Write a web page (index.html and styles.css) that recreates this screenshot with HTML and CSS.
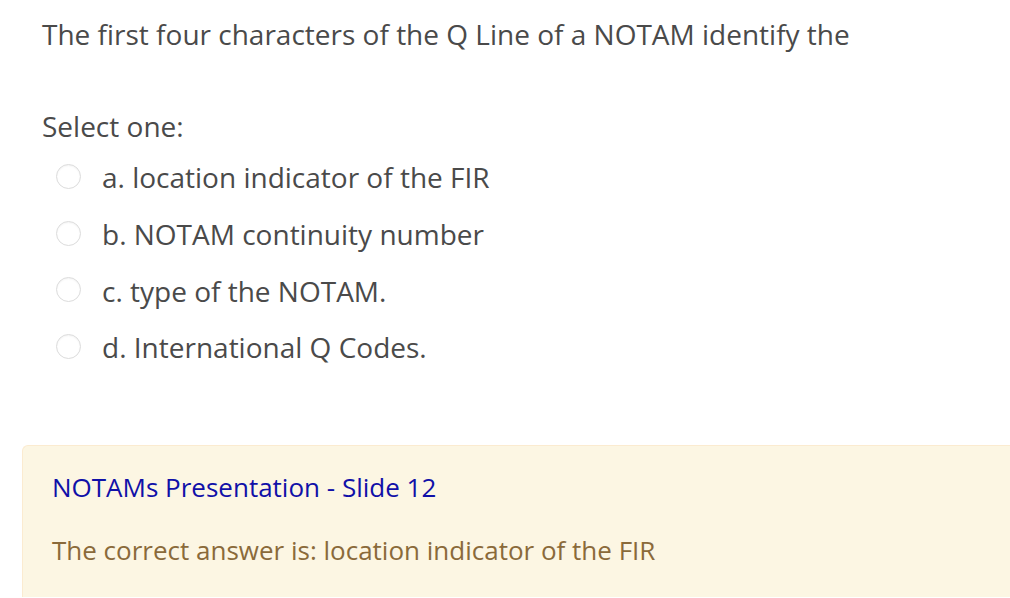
FILE: index.html
```html
<!DOCTYPE html>
<html>
<head>
<meta charset="utf-8">
<link rel="stylesheet" href="styles.css">
</head>
<body>
<div class="que">
  <div class="qtext">The first four characters of the Q Line of a NOTAM identify the</div>
  <div class="prompt">Select one:</div>
  <div class="answers">
    <div class="opt"><span class="radio"></span><span class="label">a. location indicator of the FIR</span></div>
    <div class="opt"><span class="radio"></span><span class="label">b. NOTAM continuity number</span></div>
    <div class="opt"><span class="radio"></span><span class="label">c. type of the NOTAM.</span></div>
    <div class="opt"><span class="radio"></span><span class="label">d. International Q Codes.</span></div>
  </div>
  <div class="outcome">
    <div class="feedback">NOTAMs Presentation - Slide 12</div>
    <div class="right">The correct answer is: location indicator of the FIR</div>
  </div>
</div>
</body>
</html>
```
FILE: styles.css
```css
html, body {
  margin: 0;
  padding: 0;
  background: #fff;
}
body {
  font-family: "Open Sans", "Noto Sans", sans-serif;
  font-size: 28px;
  color: #4a4a4a;
  overflow: hidden;
  height: 598px;
}
.que {
  padding: 14px 0 0 22px;
}
.qtext {
  padding-left: 20px;
  line-height: 40px;
}
.prompt {
  padding-left: 20px;
  margin-top: 52px;
  line-height: 40px;
}
.answers {
  margin-top: 3px;
  padding-left: 34px;
}
.opt {
  display: flex;
  align-items: center;
  height: 56.7px;
}
.radio {
  width: 23px;
  height: 23px;
  border-radius: 50%;
  border: 1px solid #dcdcdc;
  box-shadow: inset 0 1px 2px rgba(0,0,0,0.05);
  background: #fff;
  flex: none;
  margin-top: -2px;
}
.label {
  margin-left: 21px;
}
.outcome {
  margin-top: 69px;
  background: #fcf6e3;
  border: 1px solid #fbebd0;
  border-right: none;
  border-bottom: none;
  border-radius: 6px 0 0 0;
  padding: 21px 30px 27px 29px;
  font-size: 26px;
}
.feedback {
  color: #1010a8;
  line-height: 40px;
}
.right {
  color: #8a6a3a;
  line-height: 40px;
  margin-top: 23px;
}
```
